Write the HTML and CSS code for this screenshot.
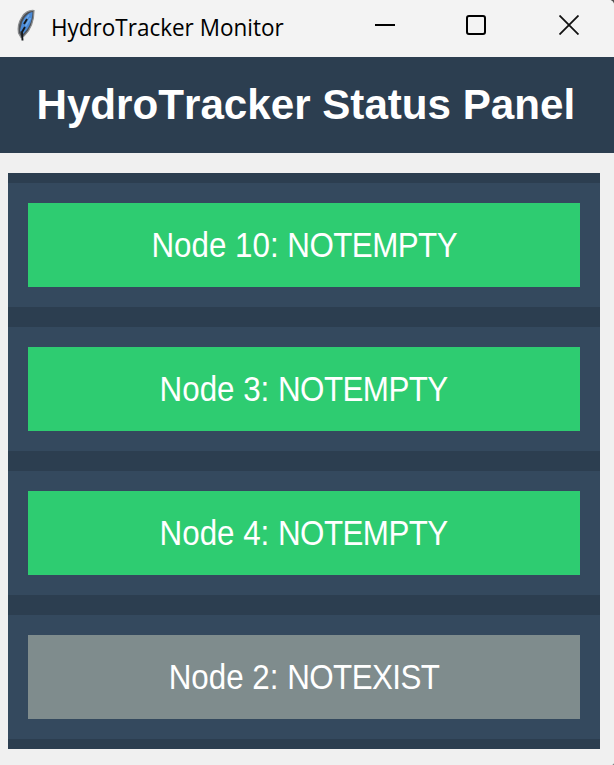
FILE: index.html
```html
<!DOCTYPE html>
<html lang="en">
<head>
<meta charset="utf-8">
<title>HydroTracker Monitor</title>
<link rel="stylesheet" href="styles.css">
</head>
<body>
<div class="window">
  <div class="titlebar">
    <svg class="feather" width="20" height="34" viewBox="0 0 20 34">
      <path d="M18 1.500C13 1 8.500 4 6 8C3 12.500 1.500 18 2.500 24L5 28.500L8 27C13 22.500 18 14 18 1.500Z" fill="#4b4f54" stroke="#8b8d8f" stroke-width="1.200"/>
      <path d="M16.500 3C11.500 4 8 8.500 6 13.500L4 21.500L6.500 25.500C12 21 16.500 12 16.500 3Z" fill="#4a8ad6"/>
      <path d="M13 6L8 13M14.500 9L9.500 17" stroke="#6ba7e8" stroke-width="1.500"/>
      <path d="M11 10L8 15M9 18L6 23L6.500 31.500" fill="none" stroke="#15181b" stroke-width="1.900"/>
    </svg>
    <span class="caption">HydroTracker Monitor</span>
    <div class="controls">
      <svg width="20" height="20" viewBox="0 0 20 20"><path d="M0 10H20" stroke="#000" stroke-width="2"/></svg>
      <svg width="20" height="20" viewBox="0 0 20 20"><rect x="1" y="1" width="18" height="18" rx="2" fill="none" stroke="#000" stroke-width="2"/></svg>
      <svg width="20" height="20" viewBox="0 0 20 20"><path d="M0.500 0.500L19.500 19.500M19.500 0.500L0.500 19.500" stroke="#111" stroke-width="1.800"/></svg>
    </div>
  </div>
  <h1 class="header"><span class="heading">HydroTracker Status Panel</span></h1>
  <div class="nodes">
    <div class="row"><div class="status filled"><span class="label">Node 10: <span class="state">NOTEMPTY</span></span></div></div>
    <div class="row"><div class="status filled"><span class="label">Node 3: <span class="state">NOTEMPTY</span></span></div></div>
    <div class="row"><div class="status filled"><span class="label">Node 4: <span class="state">NOTEMPTY</span></span></div></div>
    <div class="row"><div class="status missing"><span class="label">Node 2: <span class="state">NOTEXIST</span></span></div></div>
  </div>
</div>
</body>
</html>
```
FILE: styles.css
```css
* { box-sizing: border-box; }
body { margin: 0; background: #505050; overflow: hidden; }
.window {
  width: 614px;
  height: 765px;
  background: #f0f0f0;
  border-radius: 0 5px 2px 0;
  overflow: hidden;
  font-family: "Liberation Sans", Arial, sans-serif;
}
.titlebar {
  display: flex;
  height: 57px;
  padding-left: 16px;
  background: #f3f3f3;
}
.feather { margin-top: 9px; flex: none; }
.caption {
  margin-left: 15px;
  font-family: "Open Sans", "Noto Sans", sans-serif;
  font-size: 23.5px;
  line-height: 54px;
  color: #000;
  white-space: nowrap;
  transform: scaleX(.957);
  transform-origin: left;
}
.controls {
  display: flex;
  margin: 15px 35px 0 auto;
}
.controls svg + svg { margin-left: 71px; }
.controls svg:last-child { margin-left: 73px; }
.header {
  display: flex;
  justify-content: center;
  align-items: center;
  height: 96px;
  margin: 0;
  padding: 0 3px 2px 0;
  background: #2c3e50;
  color: #fff;
}
.heading {
  font-size: 43px;
  line-height: 48px;
  font-weight: bold;
  white-space: nowrap;
  font-kerning: none;
  transform: scaleX(.98);
}
.nodes {
  display: flex;
  flex-direction: column;
  gap: 20px;
  width: 592px;
  margin: 20px 0 0 8px;
  padding: 10px 0;
  background: #2c3e50;
}
.row { padding: 20px; background: #34495e; }
.status {
  display: flex;
  justify-content: center;
  align-items: center;
  height: 84px;
  color: #fff;
}
.filled { background: #2ecc71; }
.missing { background: #7f8c8d; }
.label {
  font-size: 34.5px;
  line-height: 40px;
  white-space: nowrap;
  font-kerning: none;
  transform: scaleX(.908);
}
.state { letter-spacing: -.6px; }
```
